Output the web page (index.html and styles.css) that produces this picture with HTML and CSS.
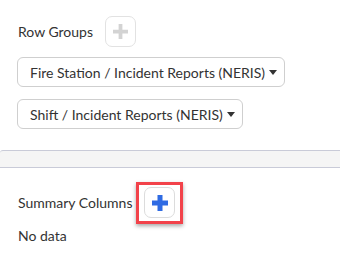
FILE: index.html
```html
<!DOCTYPE html>
<html>
<head>
    <title>Report Layout</title>
    <link rel="stylesheet" href="styles.css">
</head>
<body>
    <div class="panel">
        <div class="group-row">
            <span class="group-label">Row Groups</span>
            <button class="add-btn" type="button" disabled>
                <svg viewBox="0 0 16 16" width="15" height="15"><path d="M6 0h4v6h6v4h-6v6h-4v-6h-6v-4h6z" fill="#d3d3d3"/></svg>
            </button>
        </div>
        <div class="group-list">
            <div><button class="dropdown" type="button">Fire Station / Incident Reports (NERIS)<span class="caret"></span></button></div>
            <div><button class="dropdown" type="button">Shift / Incident Reports (NERIS)<span class="caret"></span></button></div>
        </div>
    </div>

    <div class="divider"></div>

    <div class="panel summary">
        <div class="group-row">
            <span class="group-label">Summary Columns</span>
            <span class="highlight">
                <button class="add-btn" type="button">
                    <svg viewBox="0 0 16 16" width="16" height="16"><path d="M5.5 0h5v5.5h5.5v5h-5.5v5.5h-5v-5.5h-5.5v-5h5.5z" fill="#2f6be3"/></svg>
                </button>
            </span>
        </div>
        <p class="empty">No data</p>
    </div>
</body>
</html>
```

FILE: styles.css
```css
body {
    margin: 0;
    background-color: #ffffff;
    font-family: Lato, "Open Sans", sans-serif;
    font-size: 14px;
    color: #333333;
}

.panel {
    padding: 16px 17px 21px 18px;
}

.group-row {
    display: flex;
    align-items: center;
    gap: 12px;
}

.group-label {
    line-height: 20px;
}

.add-btn {
    display: flex;
    align-items: center;
    justify-content: center;
    width: 31px;
    height: 31px;
    padding: 0;
    background-color: #ffffff;
    border: 1px solid #e2e2e2;
    border-radius: 7px;
}

.group-list {
    display: flex;
    flex-direction: column;
    gap: 12px;
    margin-top: 10px;
    margin-left: -1px;
}

.dropdown {
    display: inline-flex;
    align-items: center;
    height: 30px;
    padding: 0 7px 0 12px;
    background-color: #ffffff;
    border: 1px solid #cfcfcf;
    border-radius: 6px;
    font-family: inherit;
    font-size: 14px;
    color: #333333;
}

.caret {
    display: inline-block;
    margin-left: 4px;
    border-top: 5px solid #333333;
    border-left: 4px solid transparent;
    border-right: 4px solid transparent;
}

.divider {
    height: 16px;
    background-color: #f5f5f5;
    border-top: 1px solid #c9cbd8;
    border-bottom: 1px solid #c9cbd8;
    border-top-left-radius: 3px;
}

.summary {
    padding-top: 19px;
}

.highlight {
    position: relative;
    display: flex;
}

.highlight::after {
    content: "";
    position: absolute;
    left: -8px;
    top: -5px;
    right: -8px;
    bottom: -6px;
    border: 3px solid #f2424a;
    box-shadow: 0 2px 4px rgba(0, 0, 0, 0.35);
    pointer-events: none;
}

.summary .add-btn {
    border-color: #dcdcdc;
}

.empty {
    margin: 8px 0 0;
    line-height: 20px;
}
```
